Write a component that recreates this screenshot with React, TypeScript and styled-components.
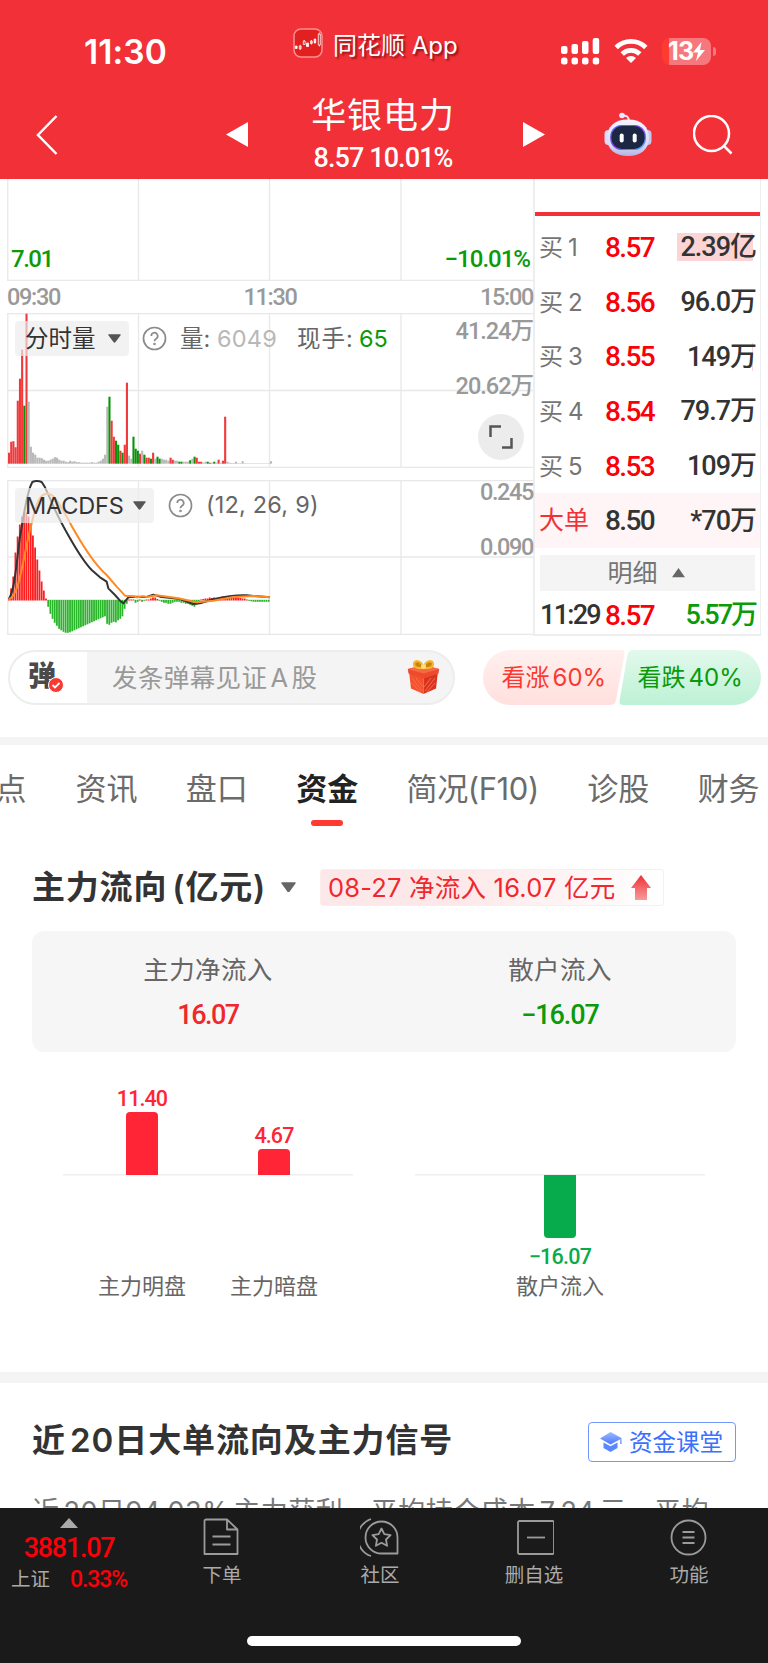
import React from 'react';
import styled, { createGlobalStyle } from 'styled-components';

const GlobalStyle = createGlobalStyle`
  * { box-sizing: border-box; }
  body { margin: 0; background: #fff; }
  svg { display: block; }
`;

const sans = `Inter, 'Noto Sans CJK SC', sans-serif`;
const din = `Roboto, 'Noto Sans CJK SC', sans-serif`;

const Page = styled.div`
  width: 768px;
  height: 1663px;
  overflow: hidden;
  display: flex;
  flex-direction: column;
  background: #fff;
  color: #333;
  font-family: ${sans};
`;

const Txt = styled.span<{ $s: number; $c?: string; $w?: number; $ls?: number; $ws?: number }>`
  font-family: ${sans};
  font-size: ${p => p.$s}px;
  line-height: ${p => Math.round(p.$s * 1.3)}px;
  color: ${p => p.$c ?? '#333'};
  font-weight: ${p => p.$w ?? 400};
  letter-spacing: ${p => p.$ls ?? 0}px;
  word-spacing: ${p => p.$ws ?? 0}px;
  white-space: nowrap;
`;
const Num = styled(Txt)`
  font-family: ${din};
  padding-top: 1px;
`;

/* ---------- header ---------- */
const Header = styled.header`
  height: 179px;
  flex: none;
  background: #f23037;
`;
const StatusBar = styled.div`
  height: 90px;
  display: flex;
  align-items: flex-start;
  padding: 28px 0 0 84px;
`;
const Clock = styled(Txt)`
  flex: none;
  width: 209px;
  padding-top: 2px;
`;
const AppName = styled(Txt)`
  flex: none;
  width: 238px;
  padding: 2px 0 0 10px;
  text-shadow: 2px 2px 2px rgba(80, 0, 0, 0.6);
`;
const StatusIcons = styled.div`
  display: flex;
  align-items: center;
  height: 28px;
  margin-top: 9px;
`;
const Battery = styled.div`
  position: relative;
  width: 49px;
  height: 27px;
  margin-left: 14px;
  border-radius: 8px;
  display: flex;
  align-items: center;
  padding-left: 6px;
  background: linear-gradient(90deg, #ff3b30 7px, #f6777c 7px);
  &::after {
    content: '';
    position: absolute;
    right: -5px;
    top: 9px;
    width: 3px;
    height: 9px;
    border-radius: 0 4px 4px 0;
    background: #f6777c;
  }
`;
const Nav = styled.nav`
  height: 89px;
  display: flex;
  align-items: flex-start;
  padding: 2px 0 0 36px;
`;
const NavIcon = styled.div<{ $l: number; $t: number }>`
  margin: ${p => p.$t}px 0 0 ${p => p.$l}px;
`;
const NavTitle = styled.div`
  width: 275px;
  display: flex;
  flex-direction: column;
  align-items: center;
  gap: 2px;
  padding-right: 5px;
`;

/* ---------- quote ---------- */
const Quote = styled.section`
  display: flex;
  height: 457px;
  flex: none;
  padding: 0 7px 0 7px;
`;
const Charts = styled.div`
  width: 528px;
  border-right: 2px solid #eee;
  display: flex;
  flex-direction: column;
`;
const Pane = styled.div<{ $h: number }>`
  position: relative;
  height: ${p => p.$h}px;
  flex: none;
`;
const Over = styled.div<{ $x?: number; $r?: number; $y: number }>`
  position: absolute;
  top: ${p => p.$y}px;
  ${p => (p.$r === undefined ? `left: ${p.$x}px;` : `right: ${p.$r}px;`)}
  display: flex;
  align-items: center;
`;
const TimeAxis = styled.div`
  height: 32px;
  display: flex;
  justify-content: space-between;
  align-items: center;
`;
const Pill = styled.div<{ $w: number }>`
  width: ${p => p.$w}px;
  height: 35px;
  border-radius: 4px;
  background: rgba(236, 236, 236, 0.68);
  display: flex;
  align-items: center;
  justify-content: space-between;
  padding: 0 8px 0 10px;
`;
const Expand = styled.div`
  width: 46px;
  height: 46px;
  border-radius: 50%;
  background: #ececec;
  display: grid;
  place-items: center;
`;
const Book = styled.div`
  flex: 1;
  border-right: 1px solid #eee;
  border-bottom: 2px solid #eee;
  display: flex;
  flex-direction: column;
`;
const BookTab = styled.div`
  height: 37px;
  flex: none;
  margin-bottom: 4px;
  border-bottom: 4px solid #f23037;
`;
const BookRow = styled.div<{ $bg?: string; $h?: number }>`
  height: ${p => p.$h ?? 54.7}px;
  flex: none;
  display: grid;
  grid-template-columns: 65px 60px 1fr;
  align-items: center;
  padding: 0 4px 0 5px;
  background: ${p => p.$bg ?? 'transparent'};
`;
const Qty = styled.div<{ $bar?: number }>`
  justify-self: end;
  height: 28px;
  display: flex;
  align-items: center;
  justify-content: flex-end;
  width: 79px;
  background: linear-gradient(#fbd5d6, #fbd5d6) right 3px top / ${p => p.$bar ?? 0}px 28px no-repeat;
`;
const Detail = styled.div`
  height: 36px;
  flex: none;
  margin: 7px 5px 0;
  background: #f4f4f4;
  display: flex;
  justify-content: center;
  align-items: center;
  gap: 14px;
  padding-right: 3px;
`;

/* ---------- comment bar ---------- */
const Comment = styled.section`
  height: 101px;
  flex: none;
  display: flex;
  align-items: flex-start;
  padding: 14px 8px 0;
`;
const Input = styled.div`
  width: 447px;
  height: 55px;
  flex: none;
  border: 2px solid #ededed;
  border-radius: 28px;
  background: linear-gradient(90deg, #fff 77px, #f4f4f4 77px);
  display: flex;
  align-items: center;
  justify-content: space-between;
  padding: 0 13px 0 18px;
`;
const Danmaku = styled.div`
  position: relative;
  width: 84px;
  display: flex;
  padding-bottom: 3px;
`;
const Badge = styled.div`
  position: absolute;
  left: 20px;
  top: 19px;
`;
const Placeholder = styled(Txt)`
  flex: 1;
`;
const Votes = styled.div`
  position: relative;
  width: 278px;
  height: 55px;
  margin-left: 27.5px;
  display: grid;
  grid-template-columns: 139px 139px;
`;
const VoteShape = styled.svg`
  position: absolute;
  inset: 0;
`;
const Vote = styled.div<{ $l: number }>`
  position: relative;
  display: flex;
  align-items: center;
  gap: 3px;
  padding-left: ${p => p.$l}px;
`;
const Band = styled.div<{ $h: number }>`
  height: ${p => p.$h}px;
  flex: none;
  background: #f4f4f4;
`;

/* ---------- tabs ---------- */
const Tabs = styled.div`
  height: 113px;
  flex: none;
  display: flex;
  gap: 48.4px;
  padding-top: 24px;
  margin-left: -5px;
`;
const Tab = styled.div<{ $on?: boolean }>`
  display: flex;
  flex-direction: column;
  align-items: center;
  gap: 11px;
  &::after {
    content: '';
    width: 32px;
    height: 6px;
    border-radius: 3px;
    background: ${p => (p.$on ? '#ff3a30' : 'transparent')};
  }
`;

/* ---------- fund flow ---------- */
const FlowHead = styled.div`
  height: 62px;
  flex: none;
  margin-top: 1px;
  display: flex;
  align-items: center;
  padding: 0 32px 6px;
`;
const FlowTitle = styled(Txt)`
  width: 233px;
`;
const Tag = styled.div`
  width: 344px;
  height: 37px;
  margin-left: 24px;
  padding: 0 12px 0 7px;
  border: 1px solid #fdecec;
  border-radius: 3px;
  background: linear-gradient(90deg, #fde8e9 40%, #fff);
  display: flex;
  align-items: center;
  justify-content: space-between;
`;
const Card = styled.div`
  height: 121px;
  flex: none;
  margin: 10px 32px 0;
  border-radius: 12px;
  background: #f6f6f6;
  display: grid;
  grid-template-columns: 1fr 1fr;
`;
const Cell = styled.div`
  display: flex;
  flex-direction: column;
  align-items: center;
  padding-top: 22px;
  gap: 11px;
`;
const BarCharts = styled.div`
  height: 320px;
  flex: none;
  display: flex;
  gap: 62px;
  padding: 0 63px;
`;
const BarGroup = styled.div<{ $g: number }>`
  width: 290px;
  height: 250px;
  display: flex;
  justify-content: center;
  gap: ${p => p.$g}px;
  background: linear-gradient(#eee, #eee) 0 122px / 100% 1.5px no-repeat;
`;
const BarCol = styled.div`
  width: 100px;
  display: flex;
  flex-direction: column;
  align-items: center;
`;
const Up = styled.div`
  height: 123px;
  display: flex;
  flex-direction: column;
  justify-content: flex-end;
  align-items: center;
`;
const UpValue = styled(Num)`
  margin-bottom: -1px;
`;
const Down = styled.div`
  height: 97px;
  display: flex;
  flex-direction: column;
  align-items: center;
  gap: 4px;
`;
const Bar = styled.div<{ $h: number; $neg?: boolean }>`
  width: 32px;
  height: ${p => p.$h}px;
  flex: none;
  background: ${p => (p.$neg ? '#07ab4b' : '#ff2436')};
  border-radius: ${p => (p.$neg ? '0 0 4px 4px' : '4px 4px 0 0')};
`;

/* ---------- recent section ---------- */
const Recent = styled.section`
  flex: none;
  height: 125px;
  overflow: hidden;
  padding: 36px 32px 0;
`;
const RecentHead = styled.div`
  display: flex;
  justify-content: space-between;
  height: 75px;
`;
const Course = styled.div`
  width: 148px;
  height: 40px;
  margin-top: 3px;
  border: 1.5px solid #7297ff;
  border-radius: 4px;
  display: flex;
  align-items: center;
  padding-left: 11px;
  gap: 7px;
`;

/* ---------- bottom bar ---------- */
const Bottom = styled.footer`
  flex: 1;
  background: #1a1a1a;
  display: flex;
  flex-direction: column;
  align-items: center;
`;
const BottomRow = styled.div`
  align-self: stretch;
  height: 128px;
  display: grid;
  grid-template-columns: 138px 168px 148px 160px 150px;
`;
const Index = styled.div`
  display: flex;
  flex-direction: column;
  align-items: center;
  padding-top: 10px;
`;
const IndexValue = styled(Num)`
  margin: 2px 0 -2px;
`;
const IndexLine = styled.div`
  display: flex;
  align-items: center;
  gap: 20px;
`;
const Item = styled.div`
  display: flex;
  flex-direction: column;
  align-items: center;
  padding-top: 9px;
  gap: 6px;
`;
const HomeBar = styled.div`
  width: 274px;
  height: 10px;
  border-radius: 5px;
  background: #fff;
`;

/* ---------- drawings ---------- */
const GRID = '#e8e8e8';
const VX = [0.8, 131.5, 262.5, 394];

const Grid = ({ h, top, mid }: { h: number; top?: boolean; mid?: number }) => (
  <g stroke={GRID} strokeWidth="1.3" fill="none">
    {VX.map(x => <path key={x} d={`M${x} 0V${h}`} />)}
    {top && <path d="M0 .7H526" />}
    {mid && <path d={`M0 ${mid}H526`} />}
    <path d={`M0 ${h - 0.7}H526`} />
  </g>
);

const VOL =
  'r11 r22 r22.5 r16.5 r63 r85 r114 g58 r150 w62 w17 w11 w9 w6 w6 w5.5 w4 w3 w3 w4 w5 w6.5 w6 w4 w3 w3 w2 w1.5 w3 w2 w2.5 w1.5 w1.5 w1 w1 w1 w1 w1 w1.5 w1 w1 w2 w3 w5 w9 w57 g67 r43 r27 g23 g19 r13 g11 r19 r81 w8 w5 g27 g15 g13 r10 w13 g9 r6 r6 g5 r11 w5 g7 g5 w5 w4 w4 w3 r6 r4 w3 w3 g2 g2 w2 w2 w2 g3.5 w5 g7 r6 r2 r2 w1 w2 g2 r1 w1 g2 w1 r4 w1 r3 r47 w2 w1 w.6 w.6 w2 w.5 w.5 w2.5 w.5 w.4 w.4 w.4 w.4 w.4 w.4 w.4 w.4 w.4 w.4 w.4 w2.5'.split(' ');
const VCOL: Record<string, string> = { r: '#f0393b', g: '#0a930a', w: '#b9b9b9' };

const HIST = [1, 12, 24, 48, 64, 76, 84, 87, 88, 84, 77, 65, 53, 41, 30, 19, 10, 2, -7, -14, -19, -23, -26, -29, -30.5, -32, -33, -33,
  -32.5, -31.5, -30.5, -29.5, -28.5, -27.5, -26.5, -25.5, -24.5, -23.5, -22.5, -21.5, -20.5, -19.5, -18.5, -17.5, -16.5, -24, -25, -23,
  -22, -22.5, -20.5, -19, -16.5, -9, -4, 1, 1, 1, -3, -2, 1, -2, -1, 1, 1, 2, 3, 3, 1.5, -1, -2, -3, -3, -4, -4, -3, -2, -2, -2, -3, -3,
  -4, -4, -5, -6, -7, -5, -4, 1, 1.5, 2, 2, 3, 2.5, 3, 2, 2, 3, 4, 4, 4.5, 4, 4, 3.5, 3.5, 3, 2.5, 2, 2, 1, -1, -1.5, -2, -2, -2, -2,
  -2, -2, -2, -2];

const Caret = ({ c = '#555', up, w = 13 }: { c?: string; up?: boolean; w?: number }) => (
  <svg width={w} height={w * 0.72} viewBox="0 0 13 9.400">
    <path d={up ? 'M0 9.400L6.500 0 13 9.400z' : 'M.8.3H12.200Q13.200.3 12.600 1.200L7.400 8.400Q6.500 9.400 5.600 8.400L.4 1.200Q-.2.3.8.3z'} fill={c} />
  </svg>
);
const Help = () => (
  <svg width="25" height="25" viewBox="0 0 25 25" fill="none" stroke="#8a8a8a" strokeWidth="1.7">
    <circle cx="12.5" cy="12.5" r="11" />
    <path d="M9.3 10a3.2 3.2 0 1 1 4.8 2.7q-1.6.9-1.6 2.6" />
    <circle cx="12.5" cy="18" r=".5" />
  </svg>
);
const AppIcon = () => (
  <svg width="30" height="30" viewBox="0 0 30 30">
    <rect x="1" y="1" width="28" height="28" rx="7" fill="#e2201f" stroke="#fa9092" strokeWidth="1.5" />
    <g stroke="#fff" strokeWidth=".8" fill="#fff">
      <path d="M2.300 18h1.800v2.500H2.300zM13.500 15h2v3.500h-2zM21.200 11h1.500v4h-1.500z" />
      <path fill="none" d="M6.300 18h1.800v2.800H6.300zM7.200 16.800v5.200M10.300 13h1.800v3.500h-1.800zM11.200 12v1M17.500 13h1.800v2.500h-1.800zM18.400 12v4.500M25.300 6h2v11h-2zM26.300 4.500v1.500M26.300 17v1.500" />
    </g>
  </svg>
);
const Signal = () => (
  <svg width="39" height="28" viewBox="0 0 39 28" fill="#fff">
    {[[0, 9], [10.5, 7], [21, 4], [31.7, 1]].map(([x, y]) => (
      <g key={x}>
        <rect x={x} y={y} width="6.500" height={17 - y} rx="2" />
        <rect x={x} y="20.500" width="6.500" height="7" rx="2.500" />
      </g>
    ))}
  </svg>
);
const Wifi = () => (
  <svg width="34" height="26" viewBox="0 0 34 26" fill="none" stroke="#fff" strokeWidth="4.800">
    <path d="M2.200 9.500a21 21 0 0 1 29.600 0" />
    <path d="M8.200 16a12.500 12.500 0 0 1 17.600 0" />
    <path d="M17 25l-5-5a7 7 0 0 1 10 0z" fill="#fff" stroke="none" />
  </svg>
);
const Robot = () => (
  <svg width="48" height="45" viewBox="0 0 48 45">
    <defs>
      <linearGradient id="shell" x1="0" y1="0" x2="0" y2="1">
        <stop offset="0" stopColor="#f4f5ff" /><stop offset=".7" stopColor="#d9daf6" /><stop offset="1" stopColor="#b4b3e4" />
      </linearGradient>
      <linearGradient id="rim" x1="0" y1="0" x2="1" y2="1">
        <stop offset="0" stopColor="#5b6cff" /><stop offset=".5" stopColor="#8d3df0" /><stop offset="1" stopColor="#41b8ff" />
      </linearGradient>
    </defs>
    <path d="M18.500 4q6-1.500 6.500 5" fill="none" stroke="#e3e4fa" strokeWidth="2" />
    <circle cx="18" cy="3.500" r="2.800" fill="#e9eaff" />
    <rect x=".5" y="18" width="8" height="15" rx="4" fill="#d9dbf5" />
    <rect x="39.500" y="18" width="8" height="15" rx="4" fill="#c4c8f0" />
    <path d="M24 7.500C38 7.500 45 15 45 26S37 44 24 44 3 37 3 26 10 7.500 24 7.500z" fill="url(#shell)" />
    <rect x="6.800" y="13.500" width="34.500" height="24" rx="11" fill="#1c2744" stroke="url(#rim)" strokeWidth="1.200" />
    <rect x="15.700" y="21.500" width="4" height="9" rx="2" fill="#fff" />
    <rect x="28.700" y="21.500" width="4" height="9" rx="2" fill="#fff" />
  </svg>
);
const Gift = () => (
  <svg width="33" height="35" viewBox="0 0 33 35">
    <path d="M2.200 13l14.300 4.500V34L4 28.500z" fill="#f4512f" />
    <path d="M30.800 13l-14.300 4.500V34L29 28.500z" fill="#d9341f" />
    <path d="M.8 9L16.500 5 32.200 9 31.500 13.500 16.500 18.500 1.500 13.500z" fill="#ee4a2c" />
    <path d="M.8 9L16.500 13.500 32.200 9 16.500 5z" fill="#f8674a" />
    <path d="M5 18l10 13M5 23l8 9M9 18l7 9M28 18L18 31M28 23l-8 9M24 18l-7 9" stroke="#f8704e" strokeWidth=".9" />
    <g fill="#c98412" stroke="#f6b62d" strokeWidth="2.200">
      <path d="M16.500 7.500C14-.5 7 0 7 4s5.500 5 9.500 3.500C19-.5 26 0 26 4s-5.500 5-9.500 3.500z" />
    </g>
    <circle cx="16.500" cy="6.500" r="2.500" fill="#ffe07a" />
  </svg>
);

const bids = [
  ['买1', '8.57', '2.39亿', 76],
  ['买2', '8.56', '96.0万', 0],
  ['买3', '8.55', '149万', 1],
  ['买4', '8.54', '79.7万', 0],
  ['买5', '8.53', '109万', 0],
] as const;

const tabs = ['点', '资讯', '盘口', '资金', '简况(F10)', '诊股', '财务'];

const BookName = styled(Txt)<{ $wide?: boolean }>`
  margin-left: -1px;
  &::first-letter { letter-spacing: ${p => (p.$wide ? 0 : 5)}px; }
`;

const iconProps = { width: 40, height: 40, viewBox: '0 0 40 40', fill: 'none', stroke: '#9b9b9b', strokeWidth: 1.8 };

export default function App() {
  return (
    <Page>
      <GlobalStyle />
      <Header>
        <StatusBar>
          <Clock $s={33.5} $w={600} $c="#fff" $ls={0.1}>11:30</Clock>
          <AppIcon />
          <AppName $s={24} $c="#fff">同花顺 App</AppName>
          <StatusIcons>
            <Signal />
            <NavIcon $l={14} $t={0}><Wifi /></NavIcon>
            <Battery>
              <Txt $s={25} $w={700} $c="#fff" $ls={-0.8}>13</Txt>
              <svg width="12" height="19" viewBox="0 0 12 19"><path d="M8.500 0L0 10.500h5L3 19 12 8H7z" fill="#fff" /></svg>
            </Battery>
          </StatusIcons>
        </StatusBar>
        <Nav>
          <NavIcon $l={0} $t={23}>
            <svg width="22" height="40" viewBox="0 0 22 40"><path d="M20.500 1L2 20 20.500 39" fill="none" stroke="#fff" strokeWidth="2.500" /></svg>
          </NavIcon>
          <NavIcon $l={168} $t={30}>
            <svg width="22" height="25" viewBox="0 0 22 25"><path d="M22 0v25L0 12.500z" fill="#fff" /></svg>
          </NavIcon>
          <NavTitle>
            <Txt $s={35} $c="#fff" $ls={0.9}>华银电力</Txt>
            <Num $s={27} $w={500} $c="#fff" $ls={-0.9}>8.57 10.01%</Num>
          </NavTitle>
          <NavIcon $l={0} $t={30}>
            <svg width="22" height="25" viewBox="0 0 22 25"><path d="M0 0v25L22 12.500z" fill="#fff" /></svg>
          </NavIcon>
          <NavIcon $l={59} $t={20}><Robot /></NavIcon>
          <NavIcon $l={41} $t={23}>
            <svg width="40" height="40" viewBox="0 0 40 40" fill="none" stroke="#fff" strokeWidth="2.500"><circle cx="18.500" cy="18.500" r="17.500" /><path d="M31 31l7.500 7.500" /></svg>
          </NavIcon>
        </Nav>
      </Header>

      <Quote>
        <Charts>
          <Pane $h={102}>
            <svg width="526" height="102"><Grid h={102} /></svg>
            <Over $x={4} $y={64}><Num $s={24} $w={500} $c="#0a9a0a" $ls={-1.5}>7.01</Num></Over>
            <Over $r={3} $y={64}><Num $s={24} $w={500} $c="#0a9a0a" $ls={-1}>−10.01%</Num></Over>
          </Pane>
          <TimeAxis>
            {['09:30', '11:30', '15:00'].map(t => <Num key={t} $s={23.5} $w={500} $c="#999" $ls={-1.3}>{t}</Num>)}
          </TimeAxis>
          <Pane $h={155}>
            <svg width="526" height="155">
              <Grid h={155} top mid={77.5} />
              {VOL.map((v, i) => {
                const h = parseFloat(v.slice(1));
                return <rect key={i} x={1 + i * 2.183} y={150.7 - h} width="2.100" height={h} fill={VCOL[v[0]]} />;
              })}
            </svg>
            <Over $x={8} $y={8}>
              <Pill $w={114}><Txt $s={23.5}>分时量</Txt><Caret /></Pill>
            </Over>
            <Over $x={135} $y={13}><Help /></Over>
            <Over $x={173} $y={10}><Txt $s={23.5} $c="#666">量:</Txt></Over>
            <Over $x={210} $y={10}><Txt $s={23.5} $c="#b8b8b8" $ls={0.2}>6049</Txt></Over>
            <Over $x={290} $y={10}><Txt $s={23.5} $c="#666" $ls={1}>现手:</Txt></Over>
            <Over $x={352} $y={10}><Txt $s={23.5} $c="#0a9a0a">65</Txt></Over>
            <Over $r={0} $y={2}><Num $s={23.5} $w={500} $c="#999" $ls={-1}>41.24万</Num></Over>
            <Over $r={0} $y={57}><Num $s={23.5} $w={500} $c="#999" $ls={-1}>20.62万</Num></Over>
            <Over $r={9} $y={101}>
              <Expand>
                <svg width="24" height="24" viewBox="0 0 24 24" fill="none" stroke="#555" strokeWidth="2.500"><path d="M1.500 12V1.500H12M22.500 13v9.500H13" /></svg>
              </Expand>
            </Over>
          </Pane>
          <Pane $h={12} />
          <Pane $h={155}>
            <svg width="526" height="155">
              <Grid h={155} top mid={77} />
              {HIST.map((v, i) => (
                <rect key={i} x={1 + i * 2.183} y={v > 0 ? 120.5 - v : 119.8} width="1.800" height={Math.abs(v)} fill={v > 0 ? '#ff1d1d' : '#2bb52b'} />
              ))}
              <g transform="translate(-7 -10) scale(.33333)" fill="none" strokeWidth="6" strokeLinejoin="round">
                <path stroke="#333" d="M26 388C45 360 50 270 60 200C70 150 78 70 97 36Q110 30 125 36L135 52 150 85C170 135 190 170 210 205S250 275 275 300L300 322 320 335 325 355 345 375 360 392 370 400 385 382 400 380 440 381 460 374 480 380 540 387 580 402 600 400 640 388Q700 374 740 376L810 382" />
                <path stroke="#ff8a22" d="M26 388C60 380 70 250 95 160C110 95 120 72 140 71S170 88 200 140C240 215 280 280 320 315L350 350 375 377 400 379 410 382 430 379 440 381 470 376 530 384Q570 392 590 397L640 392 700 381 760 378 810 382" />
              </g>
            </svg>
            <Over $x={8} $y={8}>
              <Pill $w={139}><Txt $s={23.5} $ls={-0.2}>MACDFS</Txt><Caret /></Pill>
            </Over>
            <Over $x={161} $y={13}><Help /></Over>
            <Over $x={199} $y={9}><Txt $s={23.5} $c="#666" $ls={0.2}>(12, 26, 9)</Txt></Over>
            <Over $r={0} $y={-4}><Num $s={23.5} $w={500} $c="#999" $ls={-1.4}>0.245</Num></Over>
            <Over $r={0} $y={51}><Num $s={23.5} $w={500} $c="#999" $ls={-1.4}>0.090</Num></Over>
          </Pane>
        </Charts>
        <Book>
          <BookTab />
          {bids.map(([n, p, q, bar]) => (
            <BookRow key={n}>
              <BookName $s={24} $c="#757575">{n}</BookName>
              <Num $s={28} $w={500} $c="#fb0008" $ls={-1.6}>{p}</Num>
              <Qty $bar={bar}><Num $s={27} $w={500} $ls={-1}>{q}</Num></Qty>
            </BookRow>
          ))}
          <BookRow $bg="#fff5f6">
            <BookName $wide $s={25} $c="#f23037">大单</BookName>
            <Num $s={28} $w={500} $ls={-1.6}>8.50</Num>
            <Qty><Num $s={27} $w={500} $ls={-1}>*70万</Num></Qty>
          </BookRow>
          <Detail><Txt $s={25} $c="#757575">明细</Txt><Caret c="#666" up /></Detail>
          <BookRow $h={48}>
            <Num $s={27} $w={500} $ls={-1.7}>11:29</Num>
            <Num $s={28} $w={500} $c="#fb0008" $ls={-1.6}>8.57</Num>
            <Qty><Num $s={27} $w={500} $c="#0a9a0a" $ls={-2}>5.57万</Num></Qty>
          </BookRow>
        </Book>
      </Quote>

      <Comment>
        <Input>
          <Danmaku>
            <Txt $s={28} $w={900} $c="#4a4a4a">弹</Txt>
            <Badge>
              <svg width="16" height="16" viewBox="0 0 16 16"><circle cx="8" cy="8" r="7.500" fill="#fa3a30" stroke="#fff" /><path d="M4.500 8l2.500 2.500L11.500 6" fill="none" stroke="#fff" strokeWidth="1.800" /></svg>
            </Badge>
          </Danmaku>
          <Placeholder $s={25.5} $c="#999" $ls={0.4} $ws={-4.5}>发条弹幕见证 A 股</Placeholder>
          <Gift />
        </Input>
        <Votes>
          <VoteShape width="278" height="55" viewBox="0 0 278 55">
            <defs>
              <linearGradient id="up" x2="0" y2="1"><stop stopColor="#fff0ef" /><stop offset="1" stopColor="#ffe0de" /></linearGradient>
              <linearGradient id="dn" x2="0" y2="1"><stop stopColor="#e2f9ec" /><stop offset="1" stopColor="#bdf1d4" /></linearGradient>
            </defs>
            <path d="M27.500 0H138Q142 0 141.500 4L133 50Q132 55 127 55H27.500a27.500 27.500 0 0 1 0-55z" fill="url(#up)" />
            <path d="M250.500 0H150Q145.500 0 144.500 5L136.500 51Q136 55 140 55H250.500a27.500 27.500 0 0 0 0-55z" fill="url(#dn)" />
          </VoteShape>
          <Vote $l={19}><Txt $s={24} $c="#fa3a30">看涨</Txt><Txt $s={24} $c="#fa3a30">60%</Txt></Vote>
          <Vote $l={16}><Txt $s={24} $c="#0a9a0a">看跌</Txt><Txt $s={24} $c="#0a9a0a">40%</Txt></Vote>
        </Votes>
      </Comment>

      <Band $h={8} />
      <Tabs>
        {tabs.map(t => (
          <Tab key={t} $on={t === '资金'}>
            <Txt $s={31} $w={t === '资金' ? 700 : 400} $c={t === '资金' ? '#222' : '#6b6b6b'} $ls={t === '简况(F10)' ? -0.4 : 0}>{t}</Txt>
          </Tab>
        ))}
      </Tabs>

      <FlowHead>
        <FlowTitle $s={33} $w={600} $ls={0.8} $ws={-4}>主力流向 (亿元)</FlowTitle>
        <NavIcon $l={16} $t={0}><Caret c="#666" w={15} /></NavIcon>
        <Tag>
          <Txt $s={25.5} $c="#f0282c" $ls={0.2}>08-27 净流入 16.07 亿元</Txt>
          <svg width="20" height="25" viewBox="0 0 20 25">
            <defs><linearGradient id="arr" x2="0" y2="1"><stop stopColor="#ee3034" /><stop offset="1" stopColor="#f89a9c" /></linearGradient></defs>
            <path d="M10 0l10 13h-4v12H4V13H0z" fill="url(#arr)" />
          </svg>
        </Tag>
      </FlowHead>
      <Card>
        <Cell>
          <Txt $s={25.5} $c="#666" $ls={0.4}>主力净流入</Txt>
          <Num $s={27} $w={500} $c="#f0282c" $ls={-1.5}>16.07</Num>
        </Cell>
        <Cell>
          <Txt $s={25.5} $c="#666" $ls={0.4}>散户流入</Txt>
          <Num $s={27} $w={500} $c="#0a9a0a" $ls={-1.1}>−16.07</Num>
        </Cell>
      </Card>
      <BarCharts>
        <BarGroup $g={32}>
          <BarCol>
            <Up><UpValue $s={21.5} $w={500} $c="#ff2436" $ls={-0.9}>11.40</UpValue><Bar $h={63} /></Up>
            <Down />
            <Txt $s={22} $c="#666">主力明盘</Txt>
          </BarCol>
          <BarCol>
            <Up><UpValue $s={21.5} $w={500} $c="#ff2436" $ls={-0.9}>4.67</UpValue><Bar $h={26} /></Up>
            <Down />
            <Txt $s={22} $c="#666">主力暗盘</Txt>
          </BarCol>
        </BarGroup>
        <BarGroup $g={0}>
          <BarCol>
            <Up />
            <Down><Bar $h={63} $neg /><Num $s={21.5} $w={500} $c="#07ab4b" $ls={-0.7}>−16.07</Num></Down>
            <Txt $s={22} $c="#666">散户流入</Txt>
          </BarCol>
        </BarGroup>
      </BarCharts>

      <Band $h={11} />
      <Recent>
        <RecentHead>
          <Txt $s={33} $w={600} $ls={0.9} $ws={-5}>近 20日大单流向及主力信号</Txt>
          <Course>
            <svg width="22" height="20" viewBox="0 0 22 20">
              <defs><linearGradient id="cap" x2="0" y2="1"><stop stopColor="#9db8ff" /><stop offset="1" stopColor="#4a7bff" /></linearGradient></defs>
              <path d="M10.500 0L21.500 6V12h-1.200V7.300L10.500 12.500 0 6.500z" fill="url(#cap)" />
              <path d="M3.500 10.500l7 3.800 7-3.800v5.500L10.500 20l-7-4z" fill="#5a88ff" />
            </svg>
            <Txt $s={23.5} $c="#3b70ff">资金课堂</Txt>
          </Course>
        </RecentHead>
        <Txt $s={27} $c="#777" $ls={0.5} $ws={-4}>近 20日94.03% 主力获利，平均持仓成本 7.24 元，平均</Txt>
      </Recent>

      <Bottom>
        <BottomRow>
          <Index>
            <svg width="18" height="10" viewBox="0 0 18 10"><path d="M9 0l9 10H0z" fill="#aaa" /></svg>
            <IndexValue $s={27} $w={500} $c="#fb0008" $ls={-1.3}>3881.07</IndexValue>
            <IndexLine>
              <Txt $s={19.5} $c="#aaa">上证</Txt>
              <Num $s={23} $w={500} $c="#fb0008" $ls={-1.1}>0.33%</Num>
            </IndexLine>
          </Index>
          <Item>
            <svg {...iconProps}><path d="M4 2.500h21l10.500 10V37H2.500V4a1.500 1.500 0 0 1 1.500-1.500zM25 3v9.500H35M10.500 19.500h18M10.500 27.500h18" strokeLinejoin="round" /></svg>
            <Txt $s={19.5} $c="#aaa">下单</Txt>
          </Item>
          <Item>
            <svg {...iconProps}><path d="M21.500 4.500a16 16 0 1 0 0 32H37.500V20.500A16 16 0 0 0 21.500 4.500zM11 2a19.500 19.500 0 0 0 0 37M21.500 11.500l2.800 5.700 6.300.9-4.600 4.400 1.100 6.300-5.600-3-5.600 3 1.100-6.300-4.600-4.400 6.300-.9z" strokeLinejoin="round" /></svg>
            <Txt $s={19.5} $c="#aaa">社区</Txt>
          </Item>
          <Item>
            <svg {...iconProps}><rect x="4" y="4" width="36" height="33" rx="1.500" /><path d="M13 20.500h18" /></svg>
            <Txt $s={19.5} $c="#aaa">删自选</Txt>
          </Item>
          <Item>
            <svg {...iconProps}><circle cx="19.500" cy="20.500" r="17" /><path d="M13.500 15h12M13.500 20.500h12M13.500 26h12" /></svg>
            <Txt $s={19.5} $c="#aaa">功能</Txt>
          </Item>
        </BottomRow>
        <HomeBar />
      </Bottom>
    </Page>
  );
}
